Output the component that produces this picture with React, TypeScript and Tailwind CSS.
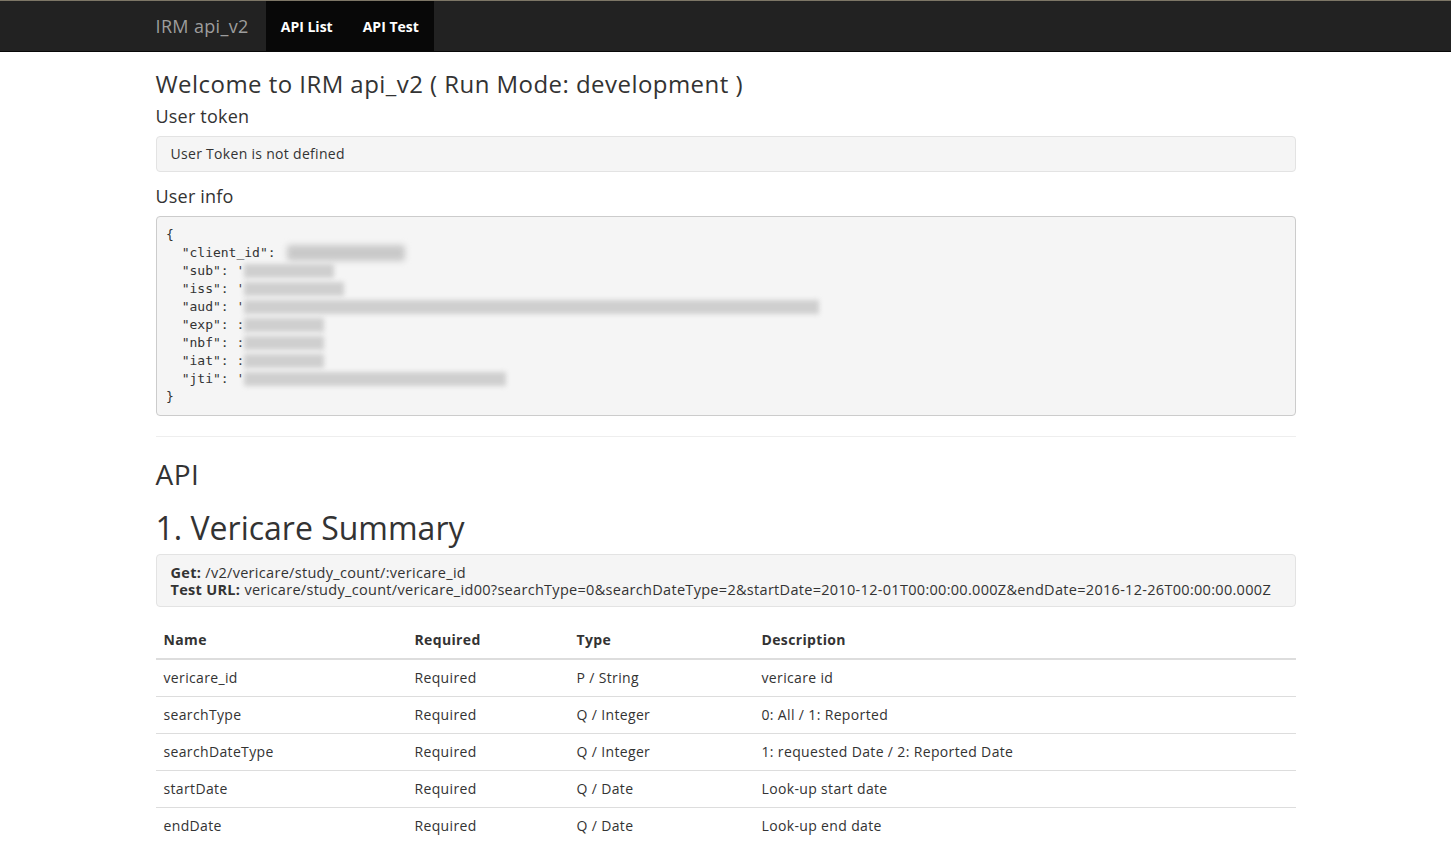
import React from "react";

const userInfo: { key: string; quote: string; blur: number; light?: boolean }[] = [
  { key: "client_id", quote: "", blur: 118, light: true },
  { key: "sub", quote: "'", blur: 90 },
  { key: "iss", quote: "'", blur: 100 },
  { key: "aud", quote: "'", blur: 575 },
  { key: "exp", quote: ":", blur: 80 },
  { key: "nbf", quote: ":", blur: 80 },
  { key: "iat", quote: ":", blur: 80 },
  { key: "jti", quote: "'", blur: 262 },
];

const params = [
  { name: "vericare_id", required: "Required", type: "P / String", description: "vericare id" },
  { name: "searchType", required: "Required", type: "Q / Integer", description: "0: All / 1: Reported" },
  { name: "searchDateType", required: "Required", type: "Q / Integer", description: "1: requested Date / 2: Reported Date" },
  { name: "startDate", required: "Required", type: "Q / Date", description: "Look-up start date" },
  { name: "endDate", required: "Required", type: "Q / Date", description: "Look-up end date" },
];

function Navbar() {
  return (
    <div className="h-[52px] border-t border-t-[#7d7666] border-b border-b-[#080808] bg-[#222222]">
      <div className="mx-auto flex h-full w-[1170px] px-[15px]">
        <div className="flex items-center pr-[17px] text-[18px] tracking-[0.35px] text-[#9d9d9d]">IRM api_v2</div>
        <div className="flex bg-[#080808]">
          <a className="flex items-center px-[15px] text-[14px] font-bold text-white">API List</a>
          <a className="flex items-center px-[15px] text-[14px] font-bold text-white">API Test</a>
        </div>
      </div>
    </div>
  );
}

function UserInfo() {
  return (
    <pre className="mt-[10px] h-[200px] rounded-[4px] border border-[#cccccc] bg-[#f5f5f5] px-[9.5px] py-[9px] font-['DejaVu_Sans_Mono',monospace] text-[13px] leading-[18px] text-[#333333]">
      <div>{"{"}</div>
      {userInfo.map((row) => (
        <div key={row.key} className="flex items-center">
          <span>{`  "${row.key}": ${row.quote}`}</span>
          <span
            className={
              row.light
                ? "ml-[4px] inline-block h-[16px] rounded-[3px] bg-[#c9c9c9] blur-[3px]"
                : "inline-block h-[14px] bg-[#cfcfcf] blur-[2.5px]"
            }
            style={{ width: row.blur }}
          />
        </div>
      ))}
      <div>{"}"}</div>
    </pre>
  );
}

export default function App() {
  return (
    <div className="min-h-screen bg-white font-['Open_Sans','Liberation_Sans',sans-serif] text-[#333333]">
      <Navbar />
      <div className="mx-auto w-[1170px] px-[15px]">
        <h3 className="mt-[19px] text-[24px] leading-[26px] font-normal tracking-[0.45px]">
          Welcome to IRM api_v2 ( Run Mode: development )
        </h3>
        <h4 className="mt-[9px] text-[18px] leading-[20px] font-normal tracking-[0.2px]">User token</h4>
        <div className="mt-[10px] rounded-[4px] border border-[#e3e3e3] bg-[#f5f5f5] px-[14px] py-[7px] text-[14px] leading-[20px] tracking-[0.3px]">
          User Token is not defined
        </div>
        <h4 className="mt-[14px] text-[18px] leading-[20px] font-normal tracking-[0.2px]">User info</h4>
        <UserInfo />
        <hr className="mt-[20px] border-t border-[#eeeeee]" />
        <h2 className="mt-[19px] text-[28px] leading-[36px] font-normal tracking-[0.5px]">API</h2>
        <h1 className="mt-[17px] text-[32px] leading-[38px] font-normal">1. Vericare Summary</h1>
        <div className="mt-[7px] rounded-[4px] border border-[#e3e3e3] bg-[#f5f5f5] px-[14px] pt-[9px] pb-[8px] text-[14.5px] leading-[17px] tracking-[0.3px] whitespace-nowrap">
          <div>
            <b>Get:</b> /v2/vericare/study_count/:vericare_id
          </div>
          <div>
            <b>Test URL:</b>{" "}
            vericare/study_count/vericare_id00?searchType=0&amp;searchDateType=2&amp;startDate=2010-12-01T00:00:00.000Z&amp;endDate=2016-12-26T00:00:00.000Z
          </div>
        </div>
        <table className="mt-[15px] w-full table-fixed border-collapse text-[14px] leading-[20px] tracking-[0.35px]">
          <thead>
            <tr className="border-b-2 border-[#dddddd]">
              <th className="w-[251px] px-[8px] py-[8px] text-left font-bold">Name</th>
              <th className="w-[162px] px-[8px] py-[8px] text-left font-bold">Required</th>
              <th className="w-[185px] px-[8px] py-[8px] text-left font-bold">Type</th>
              <th className="px-[8px] py-[8px] text-left font-bold">Description</th>
            </tr>
          </thead>
          <tbody>
            {params.map((p, i) => (
              <tr key={p.name} className={i === 0 ? "" : "border-t border-[#dddddd]"}>
                <td className="px-[8px] py-[8px]">{p.name}</td>
                <td className="px-[8px] py-[8px]">{p.required}</td>
                <td className="px-[8px] py-[8px]">{p.type}</td>
                <td className="px-[8px] py-[8px]">{p.description}</td>
              </tr>
            ))}
          </tbody>
        </table>
      </div>
    </div>
  );
}
